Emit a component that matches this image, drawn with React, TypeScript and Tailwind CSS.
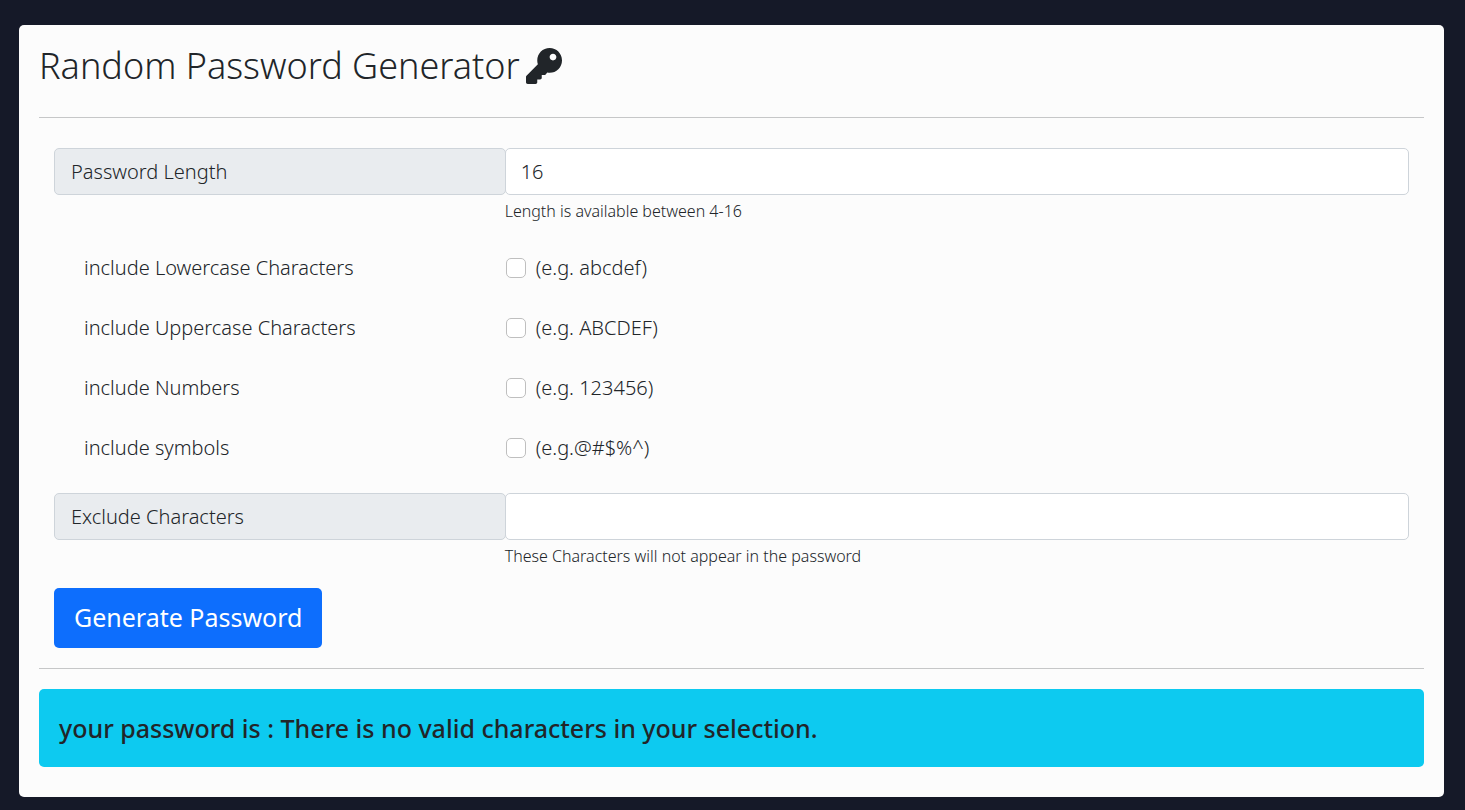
import { FaKey } from "react-icons/fa";

const options = [
  { id: "lower", label: "include Lowercase Characters", hint: "(e.g. abcdef)" },
  { id: "upper", label: "include Uppercase Characters", hint: "(e.g. ABCDEF)" },
  { id: "numbers", label: "include Numbers", hint: "(e.g. 123456)" },
  { id: "symbols", label: "include symbols", hint: "(e.g.@#$%^)" },
];

type FieldProps = { id: string; label: string; value: string; help: string };

function Field({ id, label, value, help }: FieldProps) {
  return (
    <div className="grid grid-cols-3">
      <label htmlFor={id} className="flex h-[47px] items-center rounded-[5px] border border-[#ced4da] bg-[#e9ecef] px-4">
        {label}
      </label>
      <div className="col-span-2 -ml-px">
        <input
          id={id}
          type="text"
          defaultValue={value}
          aria-describedby={`${id}-help`}
          className="block h-[47px] w-full rounded-[5px] border border-[#ced4da] bg-white px-[15px]"
        />
        <p id={`${id}-help`} className="pt-1 text-base leading-6">{help}</p>
      </div>
    </div>
  );
}

export default function App() {
  return (
    <div className="min-h-screen bg-[#151928] pt-[25px] pr-[21px] pb-[13px] pl-[19px] font-['Noto_Sans',sans-serif] text-xl font-light text-[#212529]">
      <main className="rounded-[5px] bg-[#fcfcfc] px-5 pt-4 pb-[30px]">
        <h1 className="flex items-center gap-1.5 text-[36px] leading-[50px]">
          Random Password Generator
          <FaKey className="size-9" />
        </h1>
        <hr className="mt-[26px] border-[#c6c7c8]" />
        <form className="px-[15px] pt-[30px] pb-5" onSubmit={(e) => e.preventDefault()}>
          <Field id="length" label="Password Length" value="16" help="Length is available between 4-16" />
          <div className="py-[15px]">
            {options.map((o) => (
              <div key={o.id} className="grid h-[60px] grid-cols-3 items-center">
                <label htmlFor={o.id} className="pl-[30px]">{o.label}</label>
                <div className="col-span-2 flex items-center gap-2.5">
                  <input
                    id={o.id}
                    type="checkbox"
                    className="size-5 appearance-none rounded-[5px] border border-[#bfbfbf] bg-white checked:bg-[#0d6efd]"
                  />
                  <label htmlFor={o.id}>{o.hint}</label>
                </div>
              </div>
            ))}
          </div>
          <Field id="exclude" label="Exclude Characters" value="" help="These Characters will not appear in the password" />
          <button type="submit" className="mt-5 h-[60px] rounded-[5px] bg-[#0d6efd] px-5 pb-0.5 text-[25px] font-normal text-white">
            Generate Password
          </button>
        </form>
        <hr className="border-[#c6c7c8]" />
        <div className="mt-5 rounded-[5px] bg-[#0dcaf0] p-5 text-[25px] leading-[38px] font-medium">
          your password is : There is no valid characters in your selection.
        </div>
      </main>
    </div>
  );
}
